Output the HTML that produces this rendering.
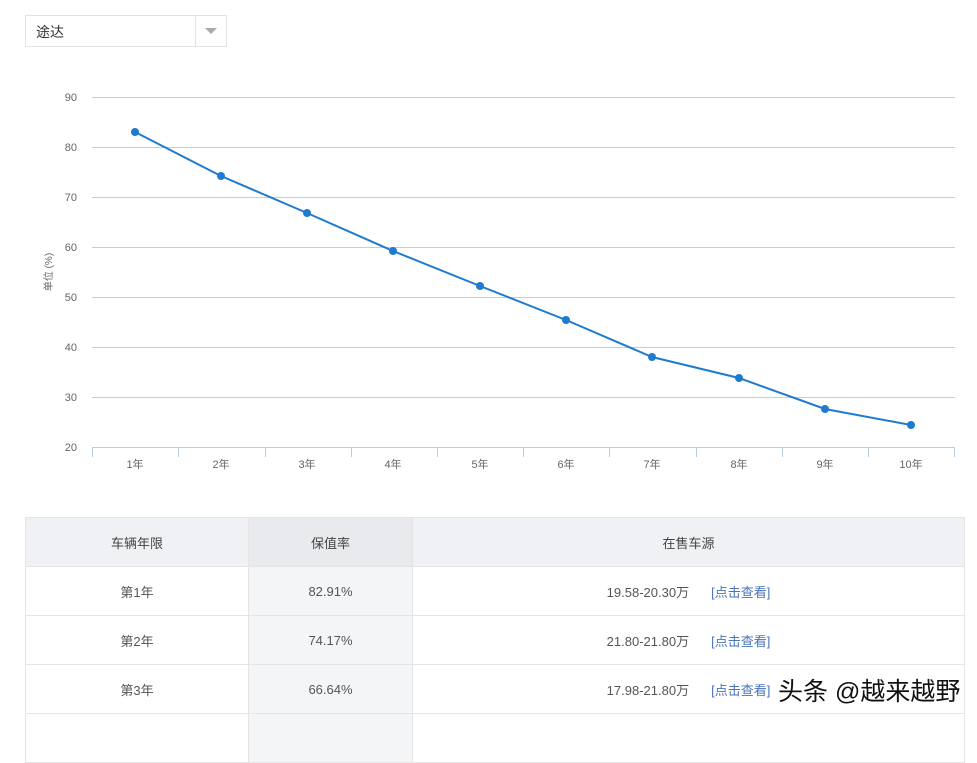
<!DOCTYPE html>
<html><head><meta charset="utf-8"><style>
body{margin:0;width:977px;height:719px;overflow:hidden;background:#fff;font-family:"Liberation Sans","Noto Sans CJK SC",sans-serif;position:relative}
.sel{position:absolute;left:25px;top:15px;width:200px;height:30px;border:1px solid #e3e3e3;font-size:14px;color:#333}
.sel span{position:absolute;left:10px;top:6px}
.sel i{position:absolute;left:169px;top:0;width:1px;height:30px;background:#e3e3e3}
.sel b{position:absolute;left:179px;top:12px;border-left:6px solid transparent;border-right:6px solid transparent;border-top:6px solid #aaa}
table{position:absolute;left:25px;top:517px;width:940px;border-collapse:collapse;font-size:13px;color:#555}
td{border:1px solid #e5e5e5;height:48px;text-align:center;padding:0}
tr:first-child td{background:#f0f1f4;color:#444}
td:nth-child(2){background:#f4f5f7}
tr:first-child td:nth-child(2){background:#e9eaee}
a{color:#4a74b8;margin-left:22px}
.wm{position:absolute;left:778px;top:672px;font-size:25px;color:#111;text-shadow:0 0 2px #fff,0 0 2px #fff}
</style></head><body>
<div class="sel"><span>途达</span><i></i><b></b></div>
<svg width="977" height="480" style="position:absolute;left:0;top:0" font-family="Liberation Sans,Noto Sans CJK SC,sans-serif" font-size="11" fill="#666">
<g stroke="#ccc" stroke-width="1">
<line x1="92" x2="955" y1="97.5" y2="97.5"/><line x1="92" x2="955" y1="147.5" y2="147.5"/><line x1="92" x2="955" y1="197.5" y2="197.5"/><line x1="92" x2="955" y1="247.5" y2="247.5"/><line x1="92" x2="955" y1="297.5" y2="297.5"/><line x1="92" x2="955" y1="347.5" y2="347.5"/><line x1="92" x2="955" y1="397.5" y2="397.5"/>
</g>
<line x1="92" x2="955" y1="447.5" y2="447.5" stroke="#b8cde0"/>
<g stroke="#b8cde0"><line x1="92.5" x2="92.5" y1="447" y2="457"/><line x1="178.5" x2="178.5" y1="447" y2="457"/><line x1="265.5" x2="265.5" y1="447" y2="457"/><line x1="351.5" x2="351.5" y1="447" y2="457"/><line x1="437.5" x2="437.5" y1="447" y2="457"/><line x1="523.5" x2="523.5" y1="447" y2="457"/><line x1="609.5" x2="609.5" y1="447" y2="457"/><line x1="696.5" x2="696.5" y1="447" y2="457"/><line x1="782.5" x2="782.5" y1="447" y2="457"/><line x1="868.5" x2="868.5" y1="447" y2="457"/><line x1="954.5" x2="954.5" y1="447" y2="457"/></g>
<g text-anchor="end"><text x="77" y="101">90</text><text x="77" y="151">80</text><text x="77" y="201">70</text><text x="77" y="251">60</text><text x="77" y="301">50</text><text x="77" y="351">40</text><text x="77" y="401">30</text><text x="77" y="451">20</text></g>
<text transform="translate(52,272) rotate(-90)" text-anchor="middle" font-size="10">单位 (%)</text>
<g text-anchor="middle"><text x="135" y="468">1年</text><text x="221" y="468">2年</text><text x="307" y="468">3年</text><text x="393" y="468">4年</text><text x="480" y="468">5年</text><text x="566" y="468">6年</text><text x="652" y="468">7年</text><text x="739" y="468">8年</text><text x="825" y="468">9年</text><text x="911" y="468">10年</text></g>
<polyline fill="none" stroke="#1e7bd0" stroke-width="2" points="135,132 221,176 307,213 393,251 480,286 566,320 652,357 739,378 825,409 911,425"/>
<g fill="#1e7bd0"><circle cx="135" cy="132" r="4"/><circle cx="221" cy="176" r="4"/><circle cx="307" cy="213" r="4"/><circle cx="393" cy="251" r="4"/><circle cx="480" cy="286" r="4"/><circle cx="566" cy="320" r="4"/><circle cx="652" cy="357" r="4"/><circle cx="739" cy="378" r="4"/><circle cx="825" cy="409" r="4"/><circle cx="911" cy="425" r="4"/></g>
</svg>
<table>
<tr><td style="width:222px">车辆年限</td><td style="width:163px">保值率</td><td>在售车源</td></tr>
<tr><td>第1年</td><td>82.91%</td><td>19.58-20.30万<a>[点击查看]</a></td></tr>
<tr><td>第2年</td><td>74.17%</td><td>21.80-21.80万<a>[点击查看]</a></td></tr>
<tr><td>第3年</td><td>66.64%</td><td>17.98-21.80万<a>[点击查看]</a></td></tr>
<tr><td></td><td></td><td></td></tr>
</table>
<div class="wm">头条 @越来越野</div>
</body></html>
